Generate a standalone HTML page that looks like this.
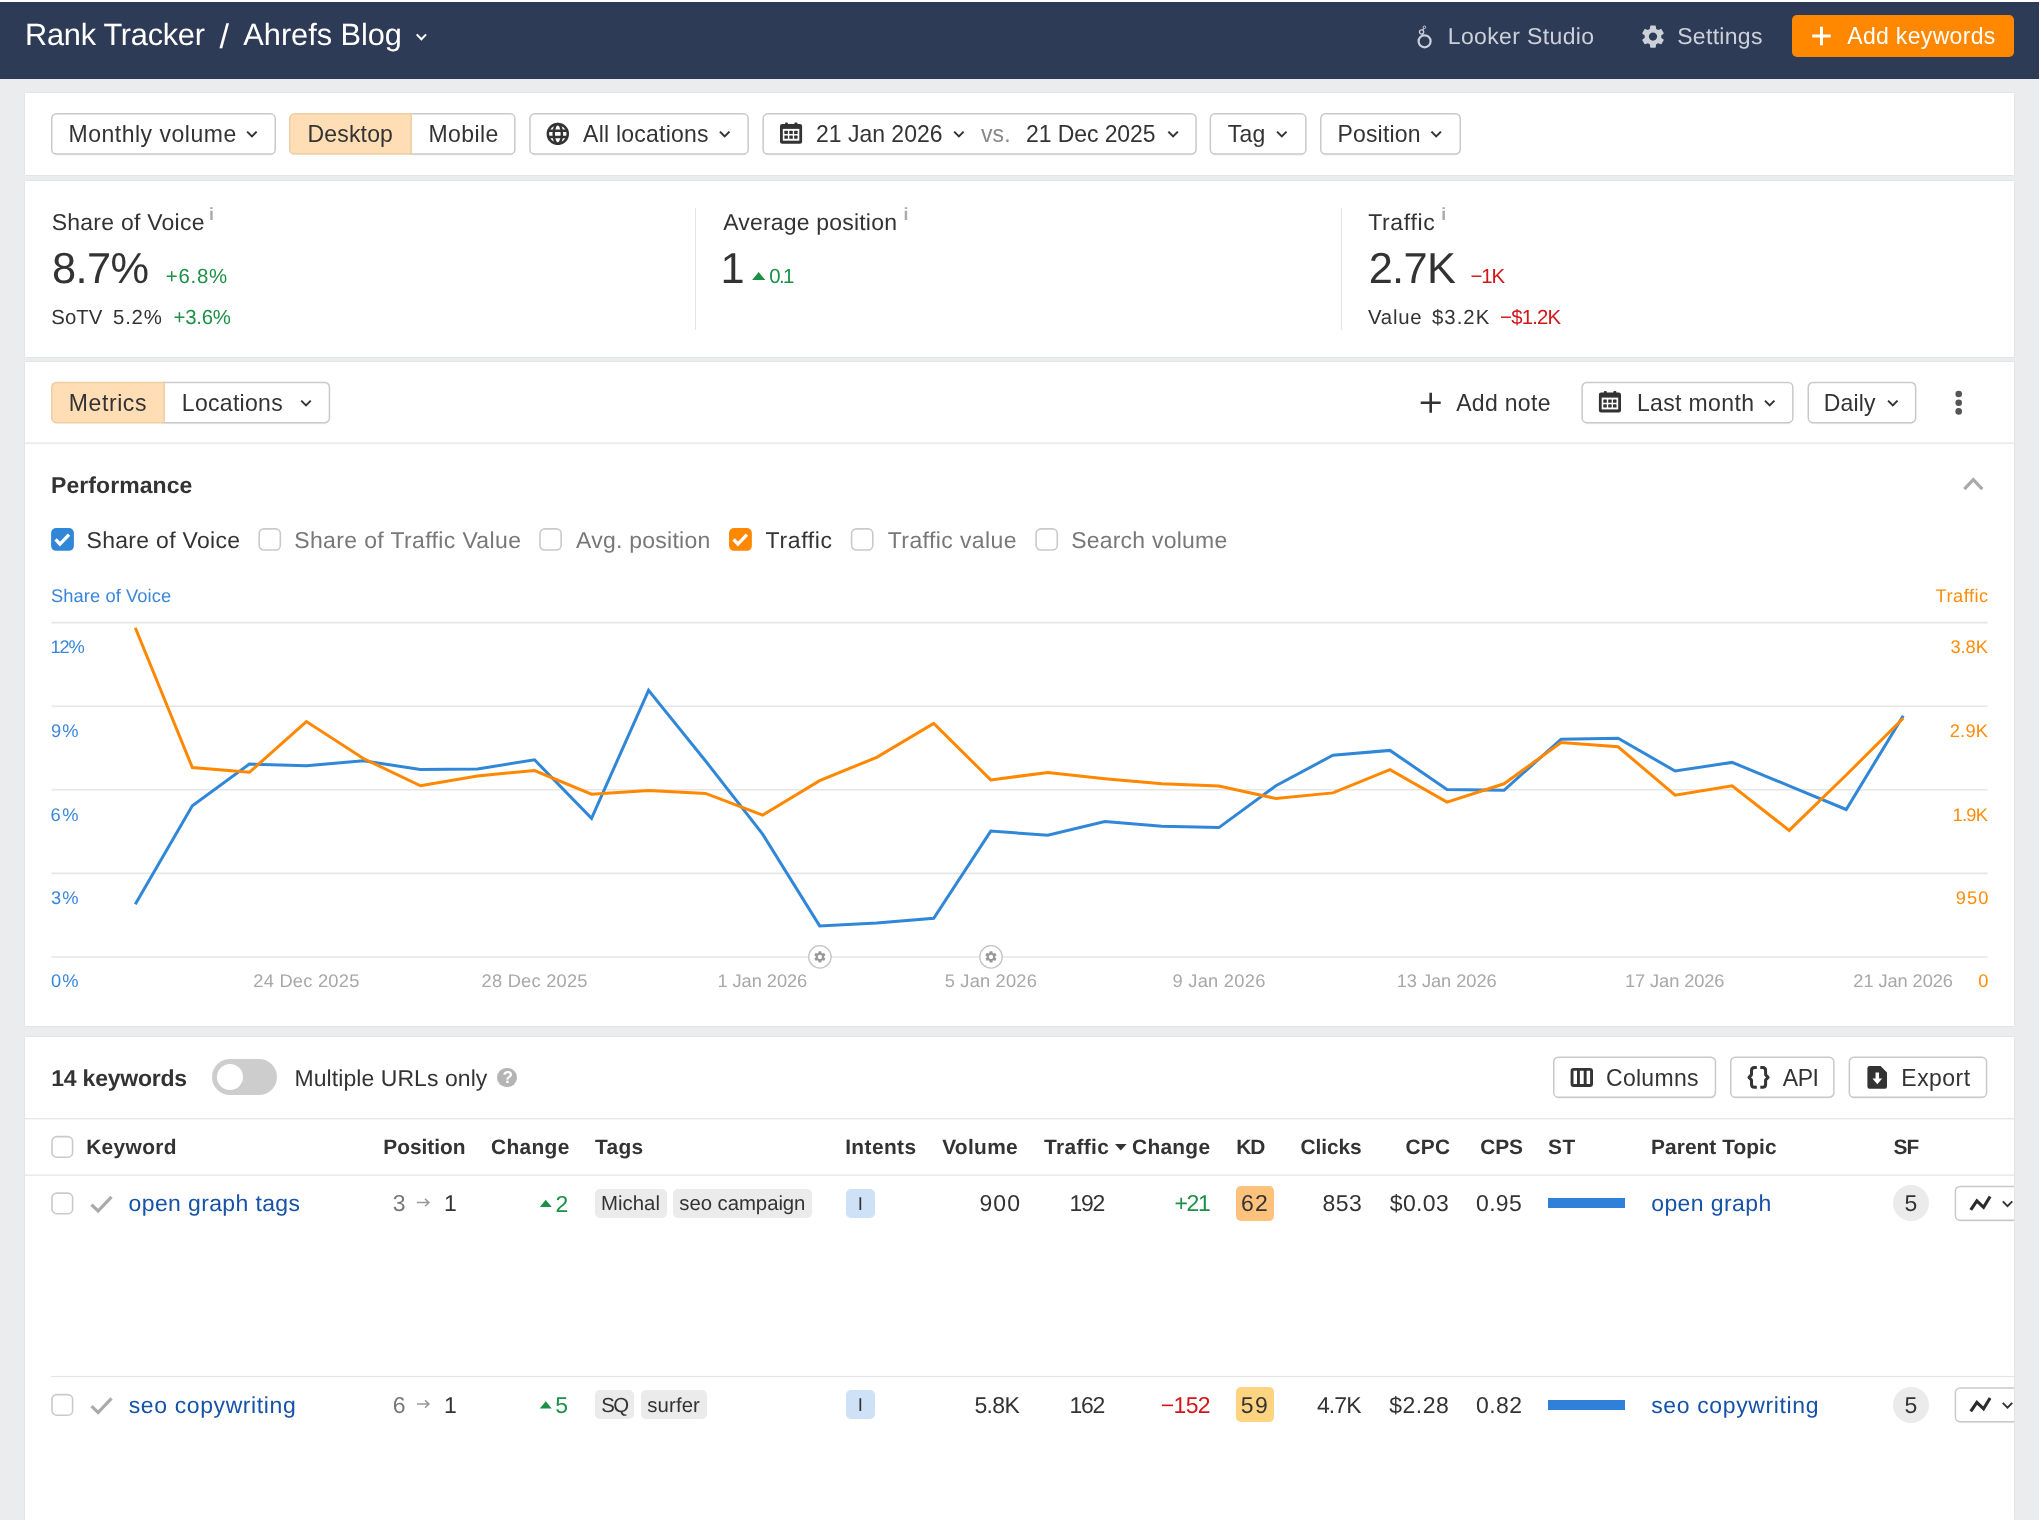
<!DOCTYPE html>
<html lang="en">
<head>
<meta charset="utf-8">
<title>Rank Tracker / Ahrefs Blog</title>
<style>
*{box-sizing:border-box;margin:0;padding:0}
html,body{width:2041px;height:1522px;overflow:hidden;background:#fff}
body{font-family:"Liberation Sans", sans-serif;color:#333;position:relative}
.app,.app *{position:absolute}
.app{background:#ebecee;overflow:hidden;text-rendering:geometricPrecision;will-change:transform}
.hdr{background:#2e3b56}
.t{white-space:nowrap;line-height:1;font-weight:400;text-decoration:none;color:#333;display:block}
h2.t{font-weight:700}
.i{display:block;overflow:visible}
button{font:inherit;background:none;border:0;cursor:pointer}
.addkw{background:#ff8800;border-radius:5px}
.panel{background:#fff;box-shadow:0 0 1.5px rgba(0,0,0,.12)}
.btn{border-radius:5px}
.hr{background:#e7e7e7}
.stat.bl{border-left:1.5px solid #e4e4e4}
.toggle{background:#cdcdcd;border-radius:18px}
.knob{background:#fff;border-radius:50%}
.q{background:#b4b4b4;border-radius:50%}
.tag{background:#ebebeb;border-radius:5px}
.tag.intent{background:#cfe1f6}
.kd{border-radius:5px}
.st{background:#2f80d8}
.sf{background:#ebebeb;border-radius:50%}
</style>
</head>
<body>
<div class="app" style="left:0px;top:2px;width:2039px;height:1518px;">
  <header class="hdr" style="left:0px;top:0px;width:2039px;height:77px;">
    <a class="t" style="left:25.11px;top:17.9px;font-size:30.72px;letter-spacing:-0.26px;color:#fff;">Rank Tracker</a>
    <span class="t" style="left:219.5px;top:18.28px;font-size:34.17px;color:#fff;">/</span>
    <a class="t" style="left:243.36px;top:17.9px;font-size:30.72px;letter-spacing:-0.02px;color:#fff;">Ahrefs Blog</a>
    <svg class="i" style="left:415px;top:31px" width="13" height="8"><g transform="translate(0.7 0.4)"><path d="M1 1 L5.7 5.8 L10.4 1" fill="none" stroke="#fff" stroke-width="2" stroke-linejoin="miter"/></g></svg>
    <svg class="i" style="left:1414px;top:21px" width="22" height="28"><g fill="none" stroke="#ccd0d9"><circle cx="10.6" cy="18.3" r="6" stroke-width="2.2"/><circle cx="7.6" cy="9" r="2.1" stroke-width="1.3"/><circle cx="10.4" cy="4.3" r="1.3" stroke-width="1"/><path d="M8.3 11l1.2 1.5M8.6 7.2l1.1-1.8" stroke-width="1.2"/></g></svg>
    <a class="t" style="left:1447.73px;top:23.34px;font-size:22.99px;letter-spacing:0.38px;color:#ccd0d9;">Looker Studio</a>
    <svg class="i" style="left:1639px;top:20px" width="28" height="29"><svg x="0.16" y="0.76" width="27.67" height="27.67" viewBox="0 0 24 24"><path fill="#ccd0d9" d="M19.14 12.94c.04-.3.06-.61.06-.94 0-.32-.02-.64-.07-.94l2.03-1.58c.18-.14.23-.41.12-.61l-1.92-3.32c-.12-.22-.37-.29-.59-.22l-2.39.96c-.5-.38-1.03-.7-1.62-.94l-.36-2.54c-.04-.24-.24-.41-.48-.41h-3.84c-.24 0-.43.17-.47.41l-.36 2.54c-.59.24-1.13.57-1.62.94l-2.39-.96c-.22-.08-.47 0-.59.22L2.74 8.87c-.12.21-.08.47.12.61l2.03 1.58c-.05.3-.09.63-.09.94s.02.64.07.94l-2.03 1.58c-.18.14-.23.41-.12.61l1.92 3.32c.12.22.37.29.59.22l2.39-.96c.5.38 1.03.7 1.62.94l.36 2.54c.05.24.24.41.48.41h3.84c.24 0 .44-.17.47-.41l.36-2.54c.59-.24 1.13-.56 1.62-.94l2.39.96c.22.08.47 0 .59-.22l1.92-3.32c.12-.22.07-.47-.12-.61l-2.01-1.58zM12 15.6c-1.98 0-3.6-1.62-3.6-3.6s1.62-3.6 3.6-3.6 3.6 1.62 3.6 3.6-1.62 3.6-3.6 3.6z"/></svg></svg>
    <a class="t" style="left:1677.24px;top:23.34px;font-size:22.99px;letter-spacing:0.31px;color:#ccd0d9;">Settings</a>
    <button class="addkw" style="left:1792.2px;top:12.6px;width:221.5px;height:42.7px;">
      <svg class="i" style="left:19.8px;top:11.4px" width="19" height="20"><g transform="translate(0.25 0.75)"><path d="M9.25 0V18.5M0 9.25H18.5" stroke="#fff" stroke-width="3" fill="none"/></g></svg>
      <span class="t" style="left:55.04px;top:10.74px;font-size:22.99px;letter-spacing:0.34px;color:#fff;">Add keywords</span>
    </button>
  </header>
  <section class="panel" style="left:25px;top:91px;width:1989px;height:82px;">
    <button class="btn" style="left:26px;top:20px;width:225px;height:42px;">
      <svg class="i" style="left:0px;top:0px" width="225" height="44"><g transform="translate(0 0.1)"><path d="M3.75 42H221.25" stroke="#000" stroke-opacity=".05" stroke-width="1.2"/><path d="M5.35 0.75H219.65A4.6 4.6 0 0 1 224.25 5.35V36.4A4.6 4.6 0 0 1 219.65 41H5.35A4.6 4.6 0 0 1 0.75 36.4V5.35A4.6 4.6 0 0 1 5.35 0.75Z" fill="#fff" stroke="#c9c9c9" stroke-width="1.5"/></g></svg>
      <span class="t" style="left:17.47px;top:10.34px;font-size:22.99px;letter-spacing:0.52px;">Monthly volume</span>
      <svg class="i" style="left:195px;top:17px" width="12" height="8"><g transform="translate(0.15 0.6)"><path d="M1 1 L5.75 5.8 L10.5 1" fill="none" stroke="#333" stroke-width="2" stroke-linejoin="miter"/></g></svg>
    </button>
    <div class="seg" style="left:264px;top:20px;width:227px;height:42px;">
      <button class="btn" style="left:123px;top:0px;width:104px;height:42px;">
        <svg class="i" style="left:-3px;top:0px" width="107" height="44"><g transform="translate(0 0.1)"><path d="M3.75 42H102.85" stroke="#000" stroke-opacity=".05" stroke-width="1.2"/><path d="M0.75 0.75H101.25A4.6 4.6 0 0 1 105.85 5.35V36.4A4.6 4.6 0 0 1 101.25 41H0.75V0.75Z" fill="#fff" stroke="#c9c9c9" stroke-width="1.5"/></g></svg>
        <span class="t" style="left:16.42px;top:10.34px;font-size:22.99px;letter-spacing:0.45px;">Mobile</span>
      </button>
      <button class="btn on" style="left:0px;top:0px;width:123px;height:42px;">
        <svg class="i" style="left:0px;top:0px" width="123" height="44"><g transform="translate(0 0.1)"><path d="M5.35 0.75H122.15V41H5.35A4.6 4.6 0 0 1 0.75 36.4V5.35A4.6 4.6 0 0 1 5.35 0.75Z" fill="#ffdeb5" stroke="#eecda5" stroke-width="1.5"/></g></svg>
        <span class="t" style="left:18.5px;top:10.34px;font-size:22.99px;letter-spacing:0.18px;">Desktop</span>
      </button>
    </div>
    <button class="btn" style="left:504px;top:20px;width:220px;height:42px;">
      <svg class="i" style="left:0px;top:0px" width="220" height="44"><g transform="translate(0.2 0.1)"><path d="M3.75 42H215.95" stroke="#000" stroke-opacity=".05" stroke-width="1.2"/><path d="M5.35 0.75H214.35A4.6 4.6 0 0 1 218.95 5.35V36.4A4.6 4.6 0 0 1 214.35 41H5.35A4.6 4.6 0 0 1 0.75 36.4V5.35A4.6 4.6 0 0 1 5.35 0.75Z" fill="#fff" stroke="#c9c9c9" stroke-width="1.5"/></g></svg>
      <svg class="i" style="left:16px;top:8px" width="25" height="25"><g transform="translate(0.75 0.85)"><g fill="none" stroke="#333" stroke-width="2.5"><circle cx="12.05" cy="12.05" r="9.95"/><ellipse cx="12.05" cy="12.05" rx="4.1" ry="9.95"/><path d="M2.5 8.85H21.6M2.5 15.25H21.6"/></g></g></svg>
      <span class="t" style="left:54.09px;top:10.34px;font-size:22.99px;letter-spacing:0.24px;">All locations</span>
      <svg class="i" style="left:189px;top:17px" width="13" height="8"><g transform="translate(0.95 0.6)"><path d="M1 1 L5.75 5.8 L10.5 1" fill="none" stroke="#333" stroke-width="2" stroke-linejoin="miter"/></g></svg>
    </button>
    <button class="btn" style="left:737px;top:20px;width:435px;height:42px;">
      <svg class="i" style="left:0px;top:0px" width="435" height="44"><g transform="translate(0.4 0.1)"><path d="M3.75 42H430.65" stroke="#000" stroke-opacity=".05" stroke-width="1.2"/><path d="M5.35 0.75H429.05A4.6 4.6 0 0 1 433.65 5.35V36.4A4.6 4.6 0 0 1 429.05 41H5.35A4.6 4.6 0 0 1 0.75 36.4V5.35A4.6 4.6 0 0 1 5.35 0.75Z" fill="#fff" stroke="#c9c9c9" stroke-width="1.5"/></g></svg>
      <svg class="i" style="left:18px;top:9px" width="23" height="22"><g transform="translate(0 0.4)"><g fill="#333"><rect x="0" y="1.5" width="22.1" height="19.9" rx="2.2"/><rect x="5" y="0" width="2.9" height="4" rx="1"/><rect x="14.4" y="0" width="3.1" height="4" rx="1"/></g><rect x="2.8" y="6.5" width="16.5" height="11.8" fill="#fff"/><g fill="#333"><rect x="4.4" y="8.4" width="3.5" height="3.2" rx=".5"/><rect x="4.4" y="13.1" width="3.5" height="3.2" rx=".5"/><rect x="9.3" y="8.4" width="3.5" height="3.2" rx=".5"/><rect x="9.3" y="13.1" width="3.5" height="3.2" rx=".5"/><rect x="14.1" y="8.4" width="3.5" height="3.2" rx=".5"/><rect x="14.1" y="13.1" width="3.5" height="3.2" rx=".5"/></g></g></svg>
      <span class="t" style="left:53.97px;top:10.34px;font-size:22.99px;">21 Jan 2026</span>
      <svg class="i" style="left:191px;top:17px" width="12" height="8"><g transform="translate(0.15 0.6)"><path d="M1 1 L5.75 5.8 L10.5 1" fill="none" stroke="#333" stroke-width="2" stroke-linejoin="miter"/></g></svg>
      <span class="t" style="left:218.96px;top:10.34px;font-size:22.99px;letter-spacing:0.16px;color:#888;">vs.</span>
      <span class="t" style="left:263.93px;top:10.34px;font-size:22.99px;letter-spacing:-0.07px;">21 Dec 2025</span>
      <svg class="i" style="left:405px;top:17px" width="12" height="8"><g transform="translate(0.35 0.6)"><path d="M1 1 L5.75 5.8 L10.5 1" fill="none" stroke="#333" stroke-width="2" stroke-linejoin="miter"/></g></svg>
    </button>
    <button class="btn" style="left:1184px;top:20px;width:98px;height:42px;">
      <svg class="i" style="left:0px;top:0px" width="98" height="44"><g transform="translate(0.6 0.1)"><path d="M3.75 42H93.25" stroke="#000" stroke-opacity=".05" stroke-width="1.2"/><path d="M5.35 0.75H91.65A4.6 4.6 0 0 1 96.25 5.35V36.4A4.6 4.6 0 0 1 91.65 41H5.35A4.6 4.6 0 0 1 0.75 36.4V5.35A4.6 4.6 0 0 1 5.35 0.75Z" fill="#fff" stroke="#c9c9c9" stroke-width="1.5"/></g></svg>
      <span class="t" style="left:18.67px;top:10.34px;font-size:22.99px;letter-spacing:0.29px;">Tag</span>
      <svg class="i" style="left:67px;top:17px" width="12" height="8"><g transform="translate(0.05 0.6)"><path d="M1 1 L5.75 5.8 L10.5 1" fill="none" stroke="#333" stroke-width="2" stroke-linejoin="miter"/></g></svg>
    </button>
    <button class="btn" style="left:1295px;top:20px;width:141px;height:42px;">
      <svg class="i" style="left:0px;top:0px" width="141" height="44"><g transform="translate(0 0.1)"><path d="M3.75 42H137.25" stroke="#000" stroke-opacity=".05" stroke-width="1.2"/><path d="M5.35 0.75H135.65A4.6 4.6 0 0 1 140.25 5.35V36.4A4.6 4.6 0 0 1 135.65 41H5.35A4.6 4.6 0 0 1 0.75 36.4V5.35A4.6 4.6 0 0 1 5.35 0.75Z" fill="#fff" stroke="#c9c9c9" stroke-width="1.5"/></g></svg>
      <span class="t" style="left:17.54px;top:10.34px;font-size:22.99px;letter-spacing:0.16px;">Position</span>
      <svg class="i" style="left:110px;top:17px" width="12" height="8"><g transform="translate(0.45 0.6)"><path d="M1 1 L5.75 5.8 L10.5 1" fill="none" stroke="#333" stroke-width="2" stroke-linejoin="miter"/></g></svg>
    </button>
  </section>
  <section class="panel" style="left:25px;top:179px;width:1989px;height:176px;">
    <div class="stat" style="left:26px;top:26px;width:644px;height:123px;">
      <span class="t" style="left:0.68px;top:4.04px;font-size:22.99px;letter-spacing:0.25px;">Share of Voice</span>
      <span class="t" style="left:158px;top:-1.08px;font-size:17.7px;font-weight:700;color:#aaa;">i</span>
      <span class="t" style="left:0.88px;top:41.29px;font-size:43.37px;letter-spacing:-0.58px;">8.7%</span>
      <span class="t" style="left:114.77px;top:59.75px;font-size:20.38px;letter-spacing:0.78px;color:#1c9046;">+6.8%</span>
      <span class="t" style="left:0.37px;top:100.95px;font-size:20.38px;letter-spacing:0.02px;">SoTV</span>
      <span class="t" style="left:62.05px;top:100.95px;font-size:20.38px;letter-spacing:0.79px;">5.2%</span>
      <span class="t" style="left:122.57px;top:100.95px;font-size:20.38px;letter-spacing:-0.26px;color:#1c9046;">+3.6%</span>
    </div>
    <div class="stat bl" style="left:670.3px;top:26.5px;width:645.4px;height:122.5px;">
      <span class="t" style="left:26.85px;top:3.54px;font-size:22.99px;letter-spacing:0.2px;">Average position</span>
      <span class="t" style="left:207.22px;top:-1.58px;font-size:17.7px;font-weight:700;color:#aaa;">i</span>
      <span class="t" style="left:24.3px;top:40.79px;font-size:43.37px;">1</span>
      <svg class="i" style="left:55.7px;top:64.5px" width="14" height="9"><g transform="translate(0.1 0.1)"><path d="M0 8L6.6 0L13.2 8Z" fill="#1c9046"/></g></svg>
      <span class="t" style="left:72.87px;top:59.25px;font-size:20.38px;letter-spacing:-1.59px;color:#1c9046;">0.1</span>
    </div>
    <div class="stat bl" style="left:1315.7px;top:26.5px;width:647.3px;height:122.5px;">
      <span class="t" style="left:26.48px;top:3.54px;font-size:22.99px;letter-spacing:0.68px;">Traffic</span>
      <span class="t" style="left:99.52px;top:-1.58px;font-size:17.7px;font-weight:700;color:#aaa;">i</span>
      <span class="t" style="left:27.03px;top:40.79px;font-size:43.37px;letter-spacing:-0.7px;">2.7K</span>
      <span class="t" style="left:128.78px;top:59.25px;font-size:20.38px;letter-spacing:-1.04px;color:#d2161a;">−1K</span>
      <span class="t" style="left:26.34px;top:100.45px;font-size:20.38px;letter-spacing:0.78px;">Value</span>
      <span class="t" style="left:90.37px;top:100.45px;font-size:20.38px;letter-spacing:1px;">$3.2K</span>
      <span class="t" style="left:158.43px;top:100.45px;font-size:20.38px;letter-spacing:-0.82px;color:#d2161a;">−$1.2K</span>
    </div>
  </section>
  <section class="panel" style="left:25px;top:360px;width:1989px;height:664px;">
    <div class="seg" style="left:26px;top:19px;width:280px;height:43px;">
      <button class="btn" style="left:114px;top:0px;width:166px;height:43px;">
        <svg class="i" style="left:-3px;top:0px" width="169" height="45"><g transform="translate(0 0.8)"><path d="M3.75 41.85H164.45" stroke="#000" stroke-opacity=".05" stroke-width="1.2"/><path d="M0.75 0.75H162.85A4.6 4.6 0 0 1 167.45 5.35V36.25A4.6 4.6 0 0 1 162.85 40.85H0.75V0.75Z" fill="#fff" stroke="#c9c9c9" stroke-width="1.5"/></g></svg>
        <span class="t" style="left:16.87px;top:11.14px;font-size:22.99px;letter-spacing:0.3px;">Locations</span>
        <svg class="i" style="left:135px;top:18px" width="12" height="8"><g transform="translate(0.25 0.6)"><path d="M1 1 L5.75 5.8 L10.5 1" fill="none" stroke="#333" stroke-width="2" stroke-linejoin="miter"/></g></svg>
      </button>
      <button class="btn on" style="left:0px;top:0px;width:114px;height:43px;">
        <svg class="i" style="left:0px;top:0px" width="114" height="45"><g transform="translate(0 0.8)"><path d="M5.35 0.75H113.15V40.85H5.35A4.6 4.6 0 0 1 0.75 36.25V5.35A4.6 4.6 0 0 1 5.35 0.75Z" fill="#ffdeb5" stroke="#eecda5" stroke-width="1.5"/></g></svg>
        <span class="t" style="left:17.85px;top:11.14px;font-size:22.99px;letter-spacing:0.59px;">Metrics</span>
      </button>
    </div>
    <button class="ghost" style="left:1385px;top:19px;width:150px;height:43px;">
      <svg class="i" style="left:10px;top:11px" width="21" height="21"><g transform="translate(0.7 0.7)"><path d="M10 0V20M0 10H20" stroke="#333" stroke-width="2.6" fill="none"/></g></svg>
      <span class="t" style="left:46.16px;top:11.14px;font-size:22.99px;letter-spacing:0.32px;">Add note</span>
    </button>
    <button class="btn" style="left:1556px;top:19px;width:213px;height:43px;">
      <svg class="i" style="left:0px;top:0px" width="213" height="45"><g transform="translate(0.4 0.8)"><path d="M3.75 41.85H208.45" stroke="#000" stroke-opacity=".05" stroke-width="1.2"/><path d="M5.35 0.75H206.85A4.6 4.6 0 0 1 211.45 5.35V36.25A4.6 4.6 0 0 1 206.85 40.85H5.35A4.6 4.6 0 0 1 0.75 36.25V5.35A4.6 4.6 0 0 1 5.35 0.75Z" fill="#fff" stroke="#c9c9c9" stroke-width="1.5"/></g></svg>
      <svg class="i" style="left:17px;top:10px" width="24" height="22"><g transform="translate(0.9 0.1)"><g fill="#333"><rect x="0" y="1.5" width="22.1" height="19.9" rx="2.2"/><rect x="5" y="0" width="2.9" height="4" rx="1"/><rect x="14.4" y="0" width="3.1" height="4" rx="1"/></g><rect x="2.8" y="6.5" width="16.5" height="11.8" fill="#fff"/><g fill="#333"><rect x="4.4" y="8.4" width="3.5" height="3.2" rx=".5"/><rect x="4.4" y="13.1" width="3.5" height="3.2" rx=".5"/><rect x="9.3" y="8.4" width="3.5" height="3.2" rx=".5"/><rect x="9.3" y="13.1" width="3.5" height="3.2" rx=".5"/><rect x="14.1" y="8.4" width="3.5" height="3.2" rx=".5"/><rect x="14.1" y="13.1" width="3.5" height="3.2" rx=".5"/></g></g></svg>
      <span class="t" style="left:55.98px;top:11.14px;font-size:22.99px;letter-spacing:0.36px;">Last month</span>
      <svg class="i" style="left:182px;top:18px" width="13" height="8"><g transform="translate(0.95 0.6)"><path d="M1 1 L5.75 5.8 L10.5 1" fill="none" stroke="#333" stroke-width="2" stroke-linejoin="miter"/></g></svg>
    </button>
    <button class="btn" style="left:1782px;top:19px;width:110px;height:43px;">
      <svg class="i" style="left:0px;top:0px" width="110" height="45"><g transform="translate(0.5 0.8)"><path d="M3.75 41.85H105.15" stroke="#000" stroke-opacity=".05" stroke-width="1.2"/><path d="M5.35 0.75H103.55A4.6 4.6 0 0 1 108.15 5.35V36.25A4.6 4.6 0 0 1 103.55 40.85H5.35A4.6 4.6 0 0 1 0.75 36.25V5.35A4.6 4.6 0 0 1 5.35 0.75Z" fill="#fff" stroke="#c9c9c9" stroke-width="1.5"/></g></svg>
      <span class="t" style="left:16.67px;top:11.14px;font-size:22.99px;letter-spacing:0.21px;">Daily</span>
      <svg class="i" style="left:80px;top:18px" width="12" height="8"><g transform="translate(0.05 0.6)"><path d="M1 1 L5.75 5.8 L10.5 1" fill="none" stroke="#333" stroke-width="2" stroke-linejoin="miter"/></g></svg>
    </button>
    <svg class="i" style="left:1929px;top:28px" width="9" height="26"><g transform="translate(0.7 0)"><circle cx="4" cy="4" r="3.3" fill="#555"/><circle cx="4" cy="12.7" r="3.3" fill="#555"/><circle cx="4" cy="21.4" r="3.3" fill="#555"/></g></svg>
    <svg class="i" style="left:0px;top:80px" width="1989" height="2"><g transform="translate(0 0.45)"><rect width="1989" height="1.3" fill="#e5e5e5"/></g></svg>
    <h2 class="t" style="left:26.1px;top:112.24px;font-size:22.99px;letter-spacing:0.07px;font-weight:700;">Performance</h2>
    <svg class="i" style="left:1937px;top:114px" width="23" height="16"><path d="M2.3 13.2L11.3 3.6L20.3 13.2" fill="none" stroke="#aaa" stroke-width="3.2"/></svg>
    <svg class="i" style="left:26px;top:166px" width="23" height="23"><g transform="translate(0.1 0.05)"><rect x="0" y="0" width="22.8" height="22.8" rx="5" fill="#3087d8"/><path d="M4.5 11.3L8.85 16.1L17.9 6.5" fill="none" stroke="#fff" stroke-width="3.3"/></g></svg>
    <label class="t" style="left:61.57px;top:167.34px;font-size:22.99px;letter-spacing:0.3px;">Share of Voice</label>
    <svg class="i" style="left:233px;top:166px" width="24" height="23"><g transform="translate(0.35 0.05)"><rect x="0.8" y="0.8" width="21.2" height="21.2" rx="4.8" fill="#fff" stroke="#cacaca" stroke-width="1.6"/></g></svg>
    <label class="t" style="left:269.27px;top:167.34px;font-size:22.99px;letter-spacing:0.37px;color:#787878;">Share of Traffic Value</label>
    <svg class="i" style="left:514px;top:166px" width="23" height="23"><g transform="translate(0.15 0.05)"><rect x="0.8" y="0.8" width="21.2" height="21.2" rx="4.8" fill="#fff" stroke="#cacaca" stroke-width="1.6"/></g></svg>
    <label class="t" style="left:551.06px;top:167.34px;font-size:22.99px;letter-spacing:0.25px;color:#787878;">Avg. position</label>
    <svg class="i" style="left:704px;top:166px" width="23" height="23"><g transform="translate(0.05 0.05)"><rect x="0" y="0" width="22.8" height="22.8" rx="5" fill="#ff8800"/><path d="M4.5 11.3L8.85 16.1L17.9 6.5" fill="none" stroke="#fff" stroke-width="3.3"/></g></svg>
    <label class="t" style="left:740.62px;top:167.34px;font-size:22.99px;letter-spacing:0.64px;">Traffic</label>
    <svg class="i" style="left:825px;top:166px" width="24" height="23"><g transform="translate(0.8 0.05)"><rect x="0.8" y="0.8" width="21.2" height="21.2" rx="4.8" fill="#fff" stroke="#cacaca" stroke-width="1.6"/></g></svg>
    <label class="t" style="left:862.79px;top:167.34px;font-size:22.99px;letter-spacing:0.4px;color:#787878;">Traffic value</label>
    <svg class="i" style="left:1010px;top:166px" width="24" height="23"><g transform="translate(0.3 0.05)"><rect x="0.8" y="0.8" width="21.2" height="21.2" rx="4.8" fill="#fff" stroke="#cacaca" stroke-width="1.6"/></g></svg>
    <label class="t" style="left:1046.13px;top:167.34px;font-size:22.99px;letter-spacing:0.23px;color:#787878;">Search volume</label>
    <svg class="i chart" style="left:26px;top:218px" width="1937" height="420" viewBox="0 0 1937 420"><g stroke="#e6e6e6" stroke-width="1.6"><line x1="0.4" x2="1936.6" y1="42.6" y2="42.6"/><line x1="0.4" x2="1936.6" y1="126.2" y2="126.2"/><line x1="0.4" x2="1936.6" y1="209.8" y2="209.8"/><line x1="0.4" x2="1936.6" y1="293.4" y2="293.4"/><line x1="0.4" x2="1936.6" y1="377" y2="377"/></g><polyline points="84.3,324.3 141.33,225.7 198.36,184.1 255.39,185.7 312.42,180.8 369.45,189.5 426.48,189 483.51,179.8 540.54,238.4 597.57,110.3 654.6,181 711.63,254.2 768.66,345.9 825.69,342.9 882.72,338.3 939.75,251.1 996.78,255.2 1053.81,241.5 1110.84,246.3 1167.87,247.6 1224.9,205.8 1281.93,175.2 1338.96,170.4 1395.99,209.4 1453.02,210.3 1510.05,159.2 1567.08,158.2 1624.11,191 1681.14,182.4 1738.17,205.8 1795.2,229.5 1852.23,135.7" fill="none" stroke="#3087d8" stroke-width="3" stroke-linejoin="miter"/><polyline points="84.3,47.8 141.33,187.5 198.36,192.3 255.39,141.6 312.42,178.5 369.45,205.8 426.48,195.9 483.51,190.5 540.54,214.2 597.57,210.4 654.6,213.4 711.63,235.1 768.66,200.7 825.69,177.3 882.72,143.4 939.75,199.9 996.78,192.5 1053.81,198.7 1110.84,203.8 1167.87,206.1 1224.9,218.5 1281.93,212.9 1338.96,189.7 1395.99,222.1 1453.02,203.8 1510.05,162.5 1567.08,166.8 1624.11,215.2 1681.14,205.8 1738.17,250.4 1795.2,195 1852.23,138.3" fill="none" stroke="#ff8800" stroke-width="3" stroke-linejoin="miter"/><circle cx="768.9" cy="376.9" r="11.2" fill="#fff" stroke="#c4c4c4" stroke-width="1.3"/><svg x="761.86" y="369.86" width="14.08" height="14.08" viewBox="0 0 24 24"><path fill="#999" d="M19.14 12.94c.04-.3.06-.61.06-.94 0-.32-.02-.64-.07-.94l2.03-1.58c.18-.14.23-.41.12-.61l-1.92-3.32c-.12-.22-.37-.29-.59-.22l-2.39.96c-.5-.38-1.03-.7-1.62-.94l-.36-2.54c-.04-.24-.24-.41-.48-.41h-3.84c-.24 0-.43.17-.47.41l-.36 2.54c-.59.24-1.13.57-1.62.94l-2.39-.96c-.22-.08-.47 0-.59.22L2.74 8.87c-.12.21-.08.47.12.61l2.03 1.58c-.05.3-.09.63-.09.94s.02.64.07.94l-2.03 1.58c-.18.14-.23.41-.12.61l1.92 3.32c.12.22.37.29.59.22l2.39-.96c.5.38 1.03.7 1.62.94l.36 2.54c.05.24.24.41.48.41h3.84c.24 0 .44-.17.47-.41l.36-2.54c.59-.24 1.13-.56 1.62-.94l2.39.96c.22.08.47 0 .59-.22l1.92-3.32c.12-.22.07-.47-.12-.61l-2.01-1.58zM12 15.6c-1.98 0-3.6-1.62-3.6-3.6s1.62-3.6 3.6-3.6 3.6 1.62 3.6 3.6-1.62 3.6-3.6 3.6z"/></svg><circle cx="940" cy="376.9" r="11.2" fill="#fff" stroke="#c4c4c4" stroke-width="1.3"/><svg x="932.96" y="369.86" width="14.08" height="14.08" viewBox="0 0 24 24"><path fill="#999" d="M19.14 12.94c.04-.3.06-.61.06-.94 0-.32-.02-.64-.07-.94l2.03-1.58c.18-.14.23-.41.12-.61l-1.92-3.32c-.12-.22-.37-.29-.59-.22l-2.39.96c-.5-.38-1.03-.7-1.62-.94l-.36-2.54c-.04-.24-.24-.41-.48-.41h-3.84c-.24 0-.43.17-.47.41l-.36 2.54c-.59.24-1.13.57-1.62.94l-2.39-.96c-.22-.08-.47 0-.59.22L2.74 8.87c-.12.21-.08.47.12.61l2.03 1.58c-.05.3-.09.63-.09.94s.02.64.07.94l-2.03 1.58c-.18.14-.23.41-.12.61l1.92 3.32c.12.22.37.29.59.22l2.39-.96c.5.38 1.03.7 1.62.94l.36 2.54c.05.24.24.41.48.41h3.84c.24 0 .44-.17.47-.41l.36-2.54c.59-.24 1.13-.56 1.62-.94l2.39.96c.22.08.47 0 .59-.22l1.92-3.32c.12-.22.07-.47-.12-.61l-2.01-1.58zM12 15.6c-1.98 0-3.6-1.62-3.6-3.6s1.62-3.6 3.6-3.6 3.6 1.62 3.6 3.6-1.62 3.6-3.6 3.6z"/></svg></svg>
    <span class="t" style="left:26.06px;top:224.52px;font-size:18.29px;letter-spacing:0.09px;color:#3a86db;">Share of Voice</span>
    <span class="t" style="left:1910.59px;top:224.52px;font-size:18.29px;letter-spacing:0.47px;color:#ff8c0a;">Traffic</span>
    <span class="t" style="left:25.59px;top:275.72px;font-size:18.29px;letter-spacing:-1.21px;color:#3a86db;">12%</span>
    <span class="t" style="left:25.98px;top:360.42px;font-size:18.29px;letter-spacing:1.15px;color:#3a86db;">9%</span>
    <span class="t" style="left:25.56px;top:444.12px;font-size:18.29px;letter-spacing:1.57px;color:#3a86db;">6%</span>
    <span class="t" style="left:25.89px;top:526.92px;font-size:18.29px;letter-spacing:1.24px;color:#3a86db;">3%</span>
    <span class="t" style="left:25.88px;top:609.72px;font-size:18.29px;letter-spacing:1.26px;color:#3a86db;">0%</span>
    <span class="t" style="left:1925.47px;top:275.72px;font-size:18.29px;letter-spacing:-0.06px;color:#ff8c0a;">3.8K</span>
    <span class="t" style="left:1924.75px;top:360.42px;font-size:18.29px;letter-spacing:0.19px;color:#ff8c0a;">2.9K</span>
    <span class="t" style="left:1927.62px;top:444.12px;font-size:18.29px;letter-spacing:-0.77px;color:#ff8c0a;">1.9K</span>
    <span class="t" style="left:1930.68px;top:526.92px;font-size:18.29px;letter-spacing:1.06px;color:#ff8c0a;">950</span>
    <span class="t" style="left:1953.14px;top:609.72px;font-size:18.29px;color:#ff8c0a;">0</span>
    <span class="t" style="left:228.27px;top:609.52px;font-size:18.29px;letter-spacing:0.24px;color:#a8a8a8;">24 Dec 2025</span>
    <span class="t" style="left:456.54px;top:609.52px;font-size:18.29px;letter-spacing:0.23px;color:#a8a8a8;">28 Dec 2025</span>
    <span class="t" style="left:692.47px;top:609.52px;font-size:18.29px;letter-spacing:-0.08px;color:#a8a8a8;">1 Jan 2026</span>
    <span class="t" style="left:919.73px;top:609.52px;font-size:18.29px;letter-spacing:0.18px;color:#a8a8a8;">5 Jan 2026</span>
    <span class="t" style="left:1147.49px;top:609.52px;font-size:18.29px;letter-spacing:0.26px;color:#a8a8a8;">9 Jan 2026</span>
    <span class="t" style="left:1371.71px;top:609.52px;font-size:18.29px;letter-spacing:-0.06px;color:#a8a8a8;">13 Jan 2026</span>
    <span class="t" style="left:1600px;top:609.52px;font-size:18.29px;letter-spacing:-0.11px;color:#a8a8a8;">17 Jan 2026</span>
    <span class="t" style="left:1828.34px;top:609.52px;font-size:18.29px;letter-spacing:-0.1px;color:#a8a8a8;">21 Jan 2026</span>
  </section>
  <section class="panel" style="left:25px;top:1035px;width:1989px;height:483px;overflow:hidden;">
    <h2 class="t" style="left:26.26px;top:30.14px;font-size:22.99px;letter-spacing:-0.21px;font-weight:700;">14 keywords</h2>
    <div class="toggle" style="left:187px;top:22px;width:65px;height:36px;">
      <div class="knob" style="left:5px;top:5px;width:26px;height:26px;"></div>
    </div>
    <label class="t" style="left:269.54px;top:30.14px;font-size:22.99px;letter-spacing:0.07px;">Multiple URLs only</label>
    <div class="q" style="left:472.4px;top:31px;width:19.4px;height:19.4px;">
      <span class="t" style="left:4.99px;top:1.01px;font-size:17.24px;font-weight:700;color:#fff;">?</span>
    </div>
    <button class="btn" style="left:1528px;top:19px;width:164px;height:42px;">
      <svg class="i" style="left:0px;top:0px" width="164" height="44"><g transform="translate(0 0.45)"><path d="M3.75 41.8H159.45" stroke="#000" stroke-opacity=".05" stroke-width="1.2"/><path d="M5.35 0.75H157.85A4.6 4.6 0 0 1 162.45 5.35V36.2A4.6 4.6 0 0 1 157.85 40.8H5.35A4.6 4.6 0 0 1 0.75 36.2V5.35A4.6 4.6 0 0 1 5.35 0.75Z" fill="#fff" stroke="#c9c9c9" stroke-width="1.5"/></g></svg>
      <svg class="i" style="left:17px;top:11px" width="23" height="21"><g transform="translate(0.6 0.9)"><rect x="1.45" y="1.45" width="19.5" height="16.2" rx="1.6" fill="none" stroke="#333" stroke-width="2.9"/><path d="M7.85 1.4v16.2M14.55 1.4v16.2" stroke="#333" stroke-width="2.9"/></g></svg>
      <span class="t" style="left:53.02px;top:11.14px;font-size:22.99px;letter-spacing:0.29px;">Columns</span>
    </button>
    <button class="btn" style="left:1705px;top:19px;width:105px;height:42px;">
      <svg class="i" style="left:0px;top:0px" width="105" height="44"><g transform="translate(0 0.45)"><path d="M3.75 41.8H100.85" stroke="#000" stroke-opacity=".05" stroke-width="1.2"/><path d="M5.35 0.75H99.25A4.6 4.6 0 0 1 103.85 5.35V36.2A4.6 4.6 0 0 1 99.25 40.8H5.35A4.6 4.6 0 0 1 0.75 36.2V5.35A4.6 4.6 0 0 1 5.35 0.75Z" fill="#fff" stroke="#c9c9c9" stroke-width="1.5"/></g></svg>
      <svg class="i" style="left:17px;top:10px" width="23" height="23"><g transform="translate(0.1 0)"><g fill="none" stroke="#333" stroke-width="3" stroke-linejoin="round"><path d="M9.7 1.5H7.4Q4.4 1.5 4.4 4.5V8.7L1.9 11.35L4.4 14V18.2Q4.4 21.2 7.4 21.2H9.7"/><path d="M13.2 1.5H15.5Q18.5 1.5 18.5 4.5V8.7L21 11.35L18.5 14V18.2Q18.5 21.2 15.5 21.2H13.2"/></g></g></svg>
      <span class="t" style="left:52.86px;top:11.14px;font-size:22.99px;letter-spacing:-0.54px;">API</span>
    </button>
    <button class="btn" style="left:1823px;top:19px;width:140px;height:42px;">
      <svg class="i" style="left:0px;top:0px" width="140" height="44"><g transform="translate(0.6 0.45)"><path d="M3.75 41.8H134.95" stroke="#000" stroke-opacity=".05" stroke-width="1.2"/><path d="M5.35 0.75H133.35A4.6 4.6 0 0 1 137.95 5.35V36.2A4.6 4.6 0 0 1 133.35 40.8H5.35A4.6 4.6 0 0 1 0.75 36.2V5.35A4.6 4.6 0 0 1 5.35 0.75Z" fill="#fff" stroke="#c9c9c9" stroke-width="1.5"/></g></svg>
      <svg class="i" style="left:19px;top:10px" width="21" height="23"><g transform="translate(0.4 0)"><path d="M2.2 0H13.2L19.6 6.4V20.5a2.2 2.2 0 0 1-2.2 2.2H2.2A2.2 2.2 0 0 1 0 20.5V2.2A2.2 2.2 0 0 1 2.2 0Z" fill="#333"/><path d="M8.15 6.4h3.5v6h3.1l-4.85 5.9-4.85-5.9h3.1z" fill="#fff"/></g></svg>
      <span class="t" style="left:53.36px;top:11.14px;font-size:22.99px;letter-spacing:0.46px;">Export</span>
    </button>
    <svg class="i" style="left:0px;top:81px" width="1989" height="2"><g transform="translate(0 0.05)"><rect width="1989" height="1.3" fill="#e5e5e5"/></g></svg>
    <div class="thead" style="left:0px;top:82.4px;width:1989px;height:55px;">
      <svg class="i" style="left:26px;top:15.6px" width="23" height="23"><g transform="translate(0.2 0.8)"><rect x="0.8" y="0.8" width="20.6" height="20.6" rx="4.8" fill="#fff" stroke="#cacaca" stroke-width="1.6"/></g></svg>
      <span class="t" style="left:61.16px;top:18.91px;font-size:20.9px;letter-spacing:0.35px;font-weight:700;">Keyword</span>
      <span class="t" style="left:358.35px;top:18.91px;font-size:20.9px;letter-spacing:-0.04px;font-weight:700;">Position</span>
      <span class="t" style="left:466.06px;top:18.91px;font-size:20.9px;letter-spacing:0.32px;font-weight:700;">Change</span>
      <span class="t" style="left:569.91px;top:18.91px;font-size:20.9px;letter-spacing:0.36px;font-weight:700;">Tags</span>
      <span class="t" style="left:820.16px;top:18.91px;font-size:20.9px;letter-spacing:0.4px;font-weight:700;">Intents</span>
      <span class="t" style="left:917.15px;top:18.91px;font-size:20.9px;letter-spacing:0.32px;font-weight:700;">Volume</span>
      <span class="t" style="left:1018.99px;top:18.91px;font-size:20.9px;letter-spacing:0.35px;font-weight:700;">Traffic</span>
      <span class="t" style="left:1107.06px;top:18.91px;font-size:20.9px;letter-spacing:0.27px;font-weight:700;">Change</span>
      <span class="t" style="left:1211.35px;top:18.91px;font-size:20.9px;letter-spacing:-1.2px;font-weight:700;">KD</span>
      <span class="t" style="left:1275.56px;top:18.91px;font-size:20.9px;letter-spacing:-0.1px;font-weight:700;">Clicks</span>
      <span class="t" style="left:1380.56px;top:18.91px;font-size:20.9px;letter-spacing:0.17px;font-weight:700;">CPC</span>
      <span class="t" style="left:1455.23px;top:18.91px;font-size:20.9px;letter-spacing:-0.11px;font-weight:700;">CPS</span>
      <span class="t" style="left:1522.94px;top:18.91px;font-size:20.9px;letter-spacing:0.58px;font-weight:700;">ST</span>
      <span class="t" style="left:1626.07px;top:18.91px;font-size:20.9px;letter-spacing:0.05px;font-weight:700;">Parent Topic</span>
      <span class="t" style="left:1868.51px;top:18.91px;font-size:20.9px;letter-spacing:-0.86px;font-weight:700;">SF</span>
      <svg class="i" style="left:1090px;top:24.6px" width="12" height="7"><path d="M0 0L5.8 6.6L11.6 0Z" fill="#333"/></svg>
    </div>
    <svg class="i" style="left:0px;top:137px" width="1989" height="2"><g transform="translate(0 0.45)"><rect width="1989" height="1.3" fill="#e5e5e5"/></g></svg>
    <div class="tr" style="left:0px;top:139.3px;width:1989px;height:54px;">
      <svg class="i" style="left:26px;top:15.7px" width="23" height="23"><g transform="translate(0.2 0.3)"><rect x="0.8" y="0.8" width="20.6" height="20.6" rx="4.8" fill="#fff" stroke="#cacaca" stroke-width="1.6"/></g></svg>
      <svg class="i" style="left:64px;top:17.7px" width="25" height="20"><g transform="translate(0.5 0.8)"><path d="M2 9.8l6.6 6.4L22 2" fill="none" stroke="#aaa" stroke-width="3.2"/></g></svg>
      <a class="t" style="left:103.59px;top:15.34px;font-size:22.99px;letter-spacing:0.38px;color:#1552a8;">open graph tags</a>
      <span class="t" style="left:367.78px;top:15.34px;font-size:22.99px;color:#777;">3</span>
      <svg class="i" style="left:392px;top:21.7px" width="14" height="10"><g transform="translate(0 0.1)"><path d="M0 4.5H12M8 0.8l4 3.7-4 3.7" fill="none" stroke="#999" stroke-width="1.5"/></g></svg>
      <span class="t" style="left:418.89px;top:15.34px;font-size:22.99px;">1</span>
      <svg class="i" style="left:514px;top:22.7px" width="13" height="8"><g transform="translate(0.8 0.8)"><path d="M0 7.2L5.95 0L11.9 7.2Z" fill="#1c9046"/></g></svg>
      <span class="t" style="left:530.58px;top:16.94px;font-size:22.99px;color:#1c9046;">2</span>
      <span class="tag" style="left:570.2px;top:12.7px;width:71.4px;height:29px;">
        <span class="t" style="left:5.7px;top:4.85px;font-size:20.38px;letter-spacing:0.06px;">Michal</span>
      </span>
      <span class="tag" style="left:648.4px;top:12.7px;width:138.4px;height:29px;">
        <span class="t" style="left:5.96px;top:4.85px;font-size:20.38px;letter-spacing:-0.06px;">seo campaign</span>
      </span>
      <span class="tag intent" style="left:821px;top:12.7px;width:29px;height:28.8px;">
        <span class="t" style="left:11.81px;top:6.14px;font-size:18.5px;">I</span>
      </span>
      <span class="t" style="left:954.55px;top:15.34px;font-size:22.99px;letter-spacing:1.01px;">900</span>
      <span class="t" style="left:1044.53px;top:15.34px;font-size:22.99px;letter-spacing:-1.35px;">192</span>
      <span class="t" style="left:1149.6px;top:15.34px;font-size:22.99px;letter-spacing:-1.41px;color:#1c9046;">+21</span>
      <span class="kd" style="left:1211px;top:9.5px;width:38.2px;height:35px;background:#ffc27d;">
        <span class="t" style="left:5.05px;top:5.84px;font-size:22.99px;letter-spacing:1.28px;">62</span>
      </span>
      <span class="t" style="left:1297.47px;top:15.34px;font-size:22.99px;letter-spacing:0.48px;">853</span>
      <span class="t" style="left:1364.8px;top:15.34px;font-size:22.99px;letter-spacing:0.36px;">$0.03</span>
      <span class="t" style="left:1451.1px;top:15.34px;font-size:22.99px;letter-spacing:0.3px;">0.95</span>
      <div class="st" style="left:1523.3px;top:21.8px;width:76.9px;height:10.4px;"></div>
      <a class="t" style="left:1626.2px;top:15.34px;font-size:22.99px;letter-spacing:0.42px;color:#1552a8;">open graph</a>
      <span class="sf" style="left:1868.2px;top:9px;width:36px;height:36px;">
        <span class="t" style="left:11.41px;top:6.34px;font-size:22.99px;">5</span>
      </span>
      <button class="btn" style="left:1930px;top:9.7px;width:75px;height:35px;">
        <svg class="i" style="left:-1px;top:-1px" width="76" height="38"><g transform="translate(0.65 0.7)"><path d="M3.75 35.45H71.6" stroke="#000" stroke-opacity=".05" stroke-width="1.2"/><path d="M5.35 0.75H70A4.6 4.6 0 0 1 74.6 5.35V29.85A4.6 4.6 0 0 1 70 34.45H5.35A4.6 4.6 0 0 1 0.75 29.85V5.35A4.6 4.6 0 0 1 5.35 0.75Z" fill="#fff" stroke="#c9c9c9" stroke-width="1.5"/></g></svg>
        <svg class="i" style="left:13px;top:7px" width="25" height="21"><g transform="translate(0 0.3)"><path d="M2.76 16.6L8.87 7.53L15.57 14.03L22.08 3.2" fill="none" stroke="#2b2b2b" stroke-width="3.1" stroke-linejoin="miter"/></g></svg>
        <svg class="i" style="left:46px;top:14px" width="13" height="8"><g transform="translate(0.75 0.4)"><path d="M1 1 L5.75 5.8 L10.5 1" fill="none" stroke="#333" stroke-width="1.9" stroke-linejoin="miter"/></g></svg>
      </button>
    </div>
    <svg class="i" style="left:26px;top:338px" width="1963" height="3"><g transform="translate(0 0.9)"><rect width="1963" height="1.2" fill="#e5e5e5"/></g></svg>
    <div class="tr" style="left:0px;top:340.8px;width:1989px;height:54px;">
      <svg class="i" style="left:26px;top:15.2px" width="23" height="23"><g transform="translate(0.2 0.8)"><rect x="0.8" y="0.8" width="20.6" height="20.6" rx="4.8" fill="#fff" stroke="#cacaca" stroke-width="1.6"/></g></svg>
      <svg class="i" style="left:64px;top:18.2px" width="25" height="20"><g transform="translate(0.5 0.3)"><path d="M2 9.8l6.6 6.4L22 2" fill="none" stroke="#aaa" stroke-width="3.2"/></g></svg>
      <a class="t" style="left:103.78px;top:16.34px;font-size:22.99px;letter-spacing:0.61px;color:#1552a8;">seo copywriting</a>
      <span class="t" style="left:367.72px;top:16.34px;font-size:22.99px;color:#777;">6</span>
      <svg class="i" style="left:392px;top:21.2px" width="14" height="10"><g transform="translate(0 0.6)"><path d="M0 4.5H12M8 0.8l4 3.7-4 3.7" fill="none" stroke="#999" stroke-width="1.5"/></g></svg>
      <span class="t" style="left:418.89px;top:16.34px;font-size:22.99px;">1</span>
      <svg class="i" style="left:514px;top:23.2px" width="13" height="8"><g transform="translate(0.8 0.3)"><path d="M0 7.2L5.95 0L11.9 7.2Z" fill="#1c9046"/></g></svg>
      <span class="t" style="left:530.35px;top:15.94px;font-size:22.99px;color:#1c9046;">5</span>
      <span class="tag" style="left:570.2px;top:12.7px;width:39.2px;height:29px;">
        <span class="t" style="left:5.94px;top:5.85px;font-size:20.38px;letter-spacing:-1.55px;">SQ</span>
      </span>
      <span class="tag" style="left:616.2px;top:12.7px;width:65.6px;height:29px;">
        <span class="t" style="left:6.11px;top:5.85px;font-size:20.38px;letter-spacing:0.11px;">surfer</span>
      </span>
      <span class="tag intent" style="left:821px;top:12.7px;width:29px;height:28.8px;">
        <span class="t" style="left:11.81px;top:5.14px;font-size:18.5px;">I</span>
      </span>
      <span class="t" style="left:949.51px;top:16.34px;font-size:22.99px;letter-spacing:-0.69px;">5.8K</span>
      <span class="t" style="left:1044.53px;top:16.34px;font-size:22.99px;letter-spacing:-1.35px;">162</span>
      <span class="t" style="left:1135.68px;top:16.34px;font-size:22.99px;letter-spacing:-0.6px;color:#d2161a;">−152</span>
      <span class="kd" style="left:1211px;top:9.5px;width:38.2px;height:35px;background:#ffd480;">
        <span class="t" style="left:4.87px;top:6.84px;font-size:22.99px;letter-spacing:1.4px;">59</span>
      </span>
      <span class="t" style="left:1291.94px;top:16.34px;font-size:22.99px;letter-spacing:-0.91px;">4.7K</span>
      <span class="t" style="left:1364.3px;top:16.34px;font-size:22.99px;letter-spacing:0.5px;">$2.28</span>
      <span class="t" style="left:1451.1px;top:16.34px;font-size:22.99px;letter-spacing:0.39px;">0.82</span>
      <div class="st" style="left:1523.3px;top:21.8px;width:76.9px;height:10.4px;"></div>
      <a class="t" style="left:1626.24px;top:16.34px;font-size:22.99px;letter-spacing:0.63px;color:#1552a8;">seo copywriting</a>
      <span class="sf" style="left:1868.2px;top:9px;width:36px;height:36px;">
        <span class="t" style="left:11.41px;top:7.34px;font-size:22.99px;">5</span>
      </span>
      <button class="btn" style="left:1930px;top:9.2px;width:75px;height:35px;">
        <svg class="i" style="left:-1px;top:0px" width="76" height="38"><g transform="translate(0.65 0.2)"><path d="M3.75 35.45H71.6" stroke="#000" stroke-opacity=".05" stroke-width="1.2"/><path d="M5.35 0.75H70A4.6 4.6 0 0 1 74.6 5.35V29.85A4.6 4.6 0 0 1 70 34.45H5.35A4.6 4.6 0 0 1 0.75 29.85V5.35A4.6 4.6 0 0 1 5.35 0.75Z" fill="#fff" stroke="#c9c9c9" stroke-width="1.5"/></g></svg>
        <svg class="i" style="left:13px;top:7px" width="25" height="21"><g transform="translate(0 0.8)"><path d="M2.76 16.6L8.87 7.53L15.57 14.03L22.08 3.2" fill="none" stroke="#2b2b2b" stroke-width="3.1" stroke-linejoin="miter"/></g></svg>
        <svg class="i" style="left:46px;top:14px" width="13" height="8"><g transform="translate(0.75 0.9)"><path d="M1 1 L5.75 5.8 L10.5 1" fill="none" stroke="#333" stroke-width="1.9" stroke-linejoin="miter"/></g></svg>
      </button>
    </div>
  </section>
</div>
</body>
</html>
